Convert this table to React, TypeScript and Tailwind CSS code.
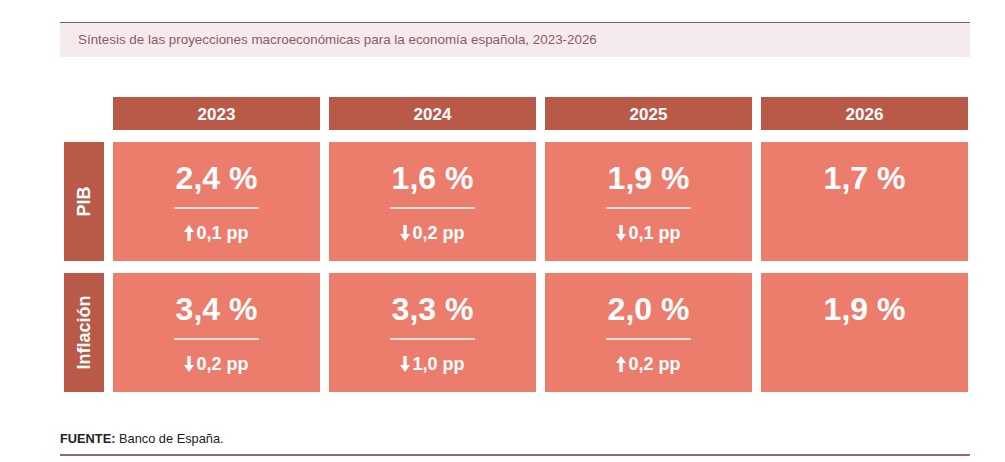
import { Fragment } from 'react'

type Cambio = { dir: 'up' | 'down'; valor: string }
type Celda = { valor: string; cambio?: Cambio }

const years = ['2023', '2024', '2025', '2026']

const filas: { etiqueta: string; celdas: Celda[] }[] = [
  {
    etiqueta: 'PIB',
    celdas: [
      { valor: '2,4 %', cambio: { dir: 'up', valor: '0,1 pp' } },
      { valor: '1,6 %', cambio: { dir: 'down', valor: '0,2 pp' } },
      { valor: '1,9 %', cambio: { dir: 'down', valor: '0,1 pp' } },
      { valor: '1,7 %' },
    ],
  },
  {
    etiqueta: 'Inflación',
    celdas: [
      { valor: '3,4 %', cambio: { dir: 'down', valor: '0,2 pp' } },
      { valor: '3,3 %', cambio: { dir: 'down', valor: '1,0 pp' } },
      { valor: '2,0 %', cambio: { dir: 'up', valor: '0,2 pp' } },
      { valor: '1,9 %' },
    ],
  },
]

// flecha gruesa, como en el original
function Flecha({ dir }: { dir: 'up' | 'down' }) {
  return (
    <svg
      width="10"
      height="16"
      viewBox="0 0 10 16"
      className={dir === 'down' ? 'rotate-180' : ''}
    >
      <path d="M5 0 L10 7 L6.7 7 L6.7 16 L3.3 16 L3.3 7 L0 7 Z" fill="white" />
    </svg>
  )
}

function CeldaDato({ celda }: { celda: Celda }) {
  return (
    <div className="bg-[#ec7c6c] flex flex-col items-center pt-[20px]">
      <div className="text-[32px] leading-[32px] font-bold text-white">{celda.valor}</div>
      {celda.cambio && (
        <>
          <div className="mt-[13px] w-[85px] h-[1.5px] bg-[#fbe3dd]" />
          <div className="mt-[14px] flex items-center gap-[2px] text-[18px] leading-[20px] font-bold text-white">
            <Flecha dir={celda.cambio.dir} />
            <span>{celda.cambio.valor}</span>
          </div>
        </>
      )}
    </div>
  )
}

export default function App() {
  return (
    <div
      className="w-[1005px] h-[462px] bg-white pt-[22px] px-[60px]"
      style={{ fontFamily: '"Liberation Sans", Arial, sans-serif' }}
    >
      <div className="w-[910px]">
        <div className="h-[1px] bg-[#7a5d68]" />
        <div className="h-[34px] bg-[#f6ebec] flex items-center pl-[18px] text-[13.4px] text-[#8c5a68]">
          Síntesis de las proyecciones macroeconómicas para la economía española, 2023-2026
        </div>

        <div className="mt-[40px] ml-[4px] w-[904px] grid grid-cols-[40px_repeat(4,1fr)] grid-rows-[33px_119px_119px] gap-x-[9px] gap-y-[12px]">
          <div />
          {years.map((y) => (
            <div
              key={y}
              className="bg-[#b95a49] flex items-center justify-center pt-[2px] text-[17px] font-bold text-white"
            >
              {y}
            </div>
          ))}
          {filas.map((fila) => (
            <Fragment key={fila.etiqueta}>
              <div className="bg-[#b95a49] flex items-center justify-center">
                <span className="-rotate-90 whitespace-nowrap text-[18px] font-bold text-white">
                  {fila.etiqueta}
                </span>
              </div>
              {fila.celdas.map((c, i) => (
                <CeldaDato key={i} celda={c} />
              ))}
            </Fragment>
          ))}
        </div>

        <div className="mt-[40px] text-[12.8px] leading-[14px] text-[#222]">
          <span className="font-bold">FUENTE:</span> Banco de España.
        </div>
        <div className="mt-[8px] h-[2px] bg-[#9b6479]" />
      </div>
    </div>
  )
}
